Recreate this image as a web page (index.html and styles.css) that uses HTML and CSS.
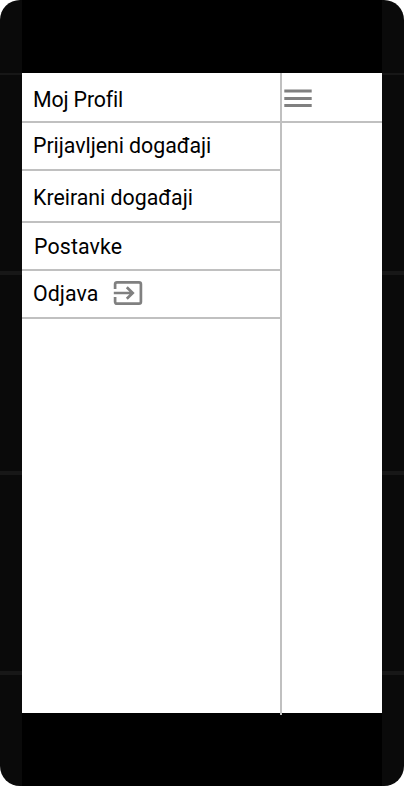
FILE: index.html
```html
<!DOCTYPE html>
<html lang="hr">
<head>
<meta charset="utf-8">
<title>Izbornik</title>
<link rel="stylesheet" href="styles.css">
</head>
<body>
<div class="phone">
  <main class="screen">
    <nav class="drawer">
      <a class="item profile">Moj Profil</a>
      <a class="item applied">Prijavljeni događaji</a>
      <a class="item created">Kreirani događaji</a>
      <a class="item settings">Postavke</a>
      <a class="item logout">Odjava
        <svg class="exit" width="30" height="26" viewBox="0 0 30 26" fill="none" stroke="#808080" stroke-width="2.7">
          <path d="M2.1 9V4.2Q2.1 2.3 4 2.3H26Q27.9 2.3 27.9 4.2V21.8Q27.9 23.7 26 23.7H4Q2.1 23.7 2.1 21.8V17"/>
          <path d="M.8 13H20M13.8 7.3L19.7 13L13.8 18.7"/>
        </svg>
      </a>
    </nav>
    <section class="content">
      <header class="bar">
        <svg width="28" height="20" viewBox="0 0 28 20" fill="#808080">
          <path d="M.3 1.5h27.4v3H.3zM.3 9h27.4v3H.3zM.3 16h27.4v3H.3z"/>
        </svg>
      </header>
    </section>
  </main>
</div>
</body>
</html>
```
FILE: styles.css
```css
body {
  margin: 0;
  background: #fff;
  overflow: hidden;
}

.phone {
  box-sizing: border-box;
  height: 786px;
  padding: 73px 22px;
  border-radius: 20px;
  background:
    linear-gradient(#000, #000) 22px 0 / 360px 100% no-repeat,
    linear-gradient(#171717, #171717) 0 73px / 100% 2px no-repeat,
    linear-gradient(#171717, #171717) 0 271px / 100% 4px no-repeat,
    linear-gradient(#171717, #171717) 0 471px / 100% 4px no-repeat,
    linear-gradient(#171717, #171717) 0 671px / 100% 4px no-repeat,
    #0a0a0a;
}

.screen {
  display: flex;
  height: 640px;
  background: #fff;
}

.drawer {
  box-sizing: border-box;
  width: 260px;
  height: 642px;
  border-right: 2px solid #c0c0c0;
}

.item {
  box-sizing: border-box;
  display: flex;
  align-items: center;
  height: 48px;
  padding-left: 11px;
  border-bottom: 2px solid #c0c0c0;
  color: #000;
  font: 21.33px/24px Roboto, sans-serif;
  font-variant-ligatures: none;
  white-space: nowrap;
}

.profile {
  height: 50px;
  padding-top: 5px;
  letter-spacing: -0.15px;
}

.applied {
  padding-bottom: 1px;
  letter-spacing: -0.04px;
}

.created {
  height: 52px;
  padding-top: 3px;
}

.settings {
  padding-top: 2px;
  padding-left: 12px;
  letter-spacing: 0.13px;
}

.logout {
  letter-spacing: 0.08px;
}

.exit {
  margin: 0 0 2px 14.5px;
}

.content {
  flex: 1;
}

.bar {
  box-sizing: border-box;
  height: 50px;
  padding: 15px 2px 0;
  border-bottom: 2px solid #c0c0c0;
}

.bar svg {
  display: block;
}
```
